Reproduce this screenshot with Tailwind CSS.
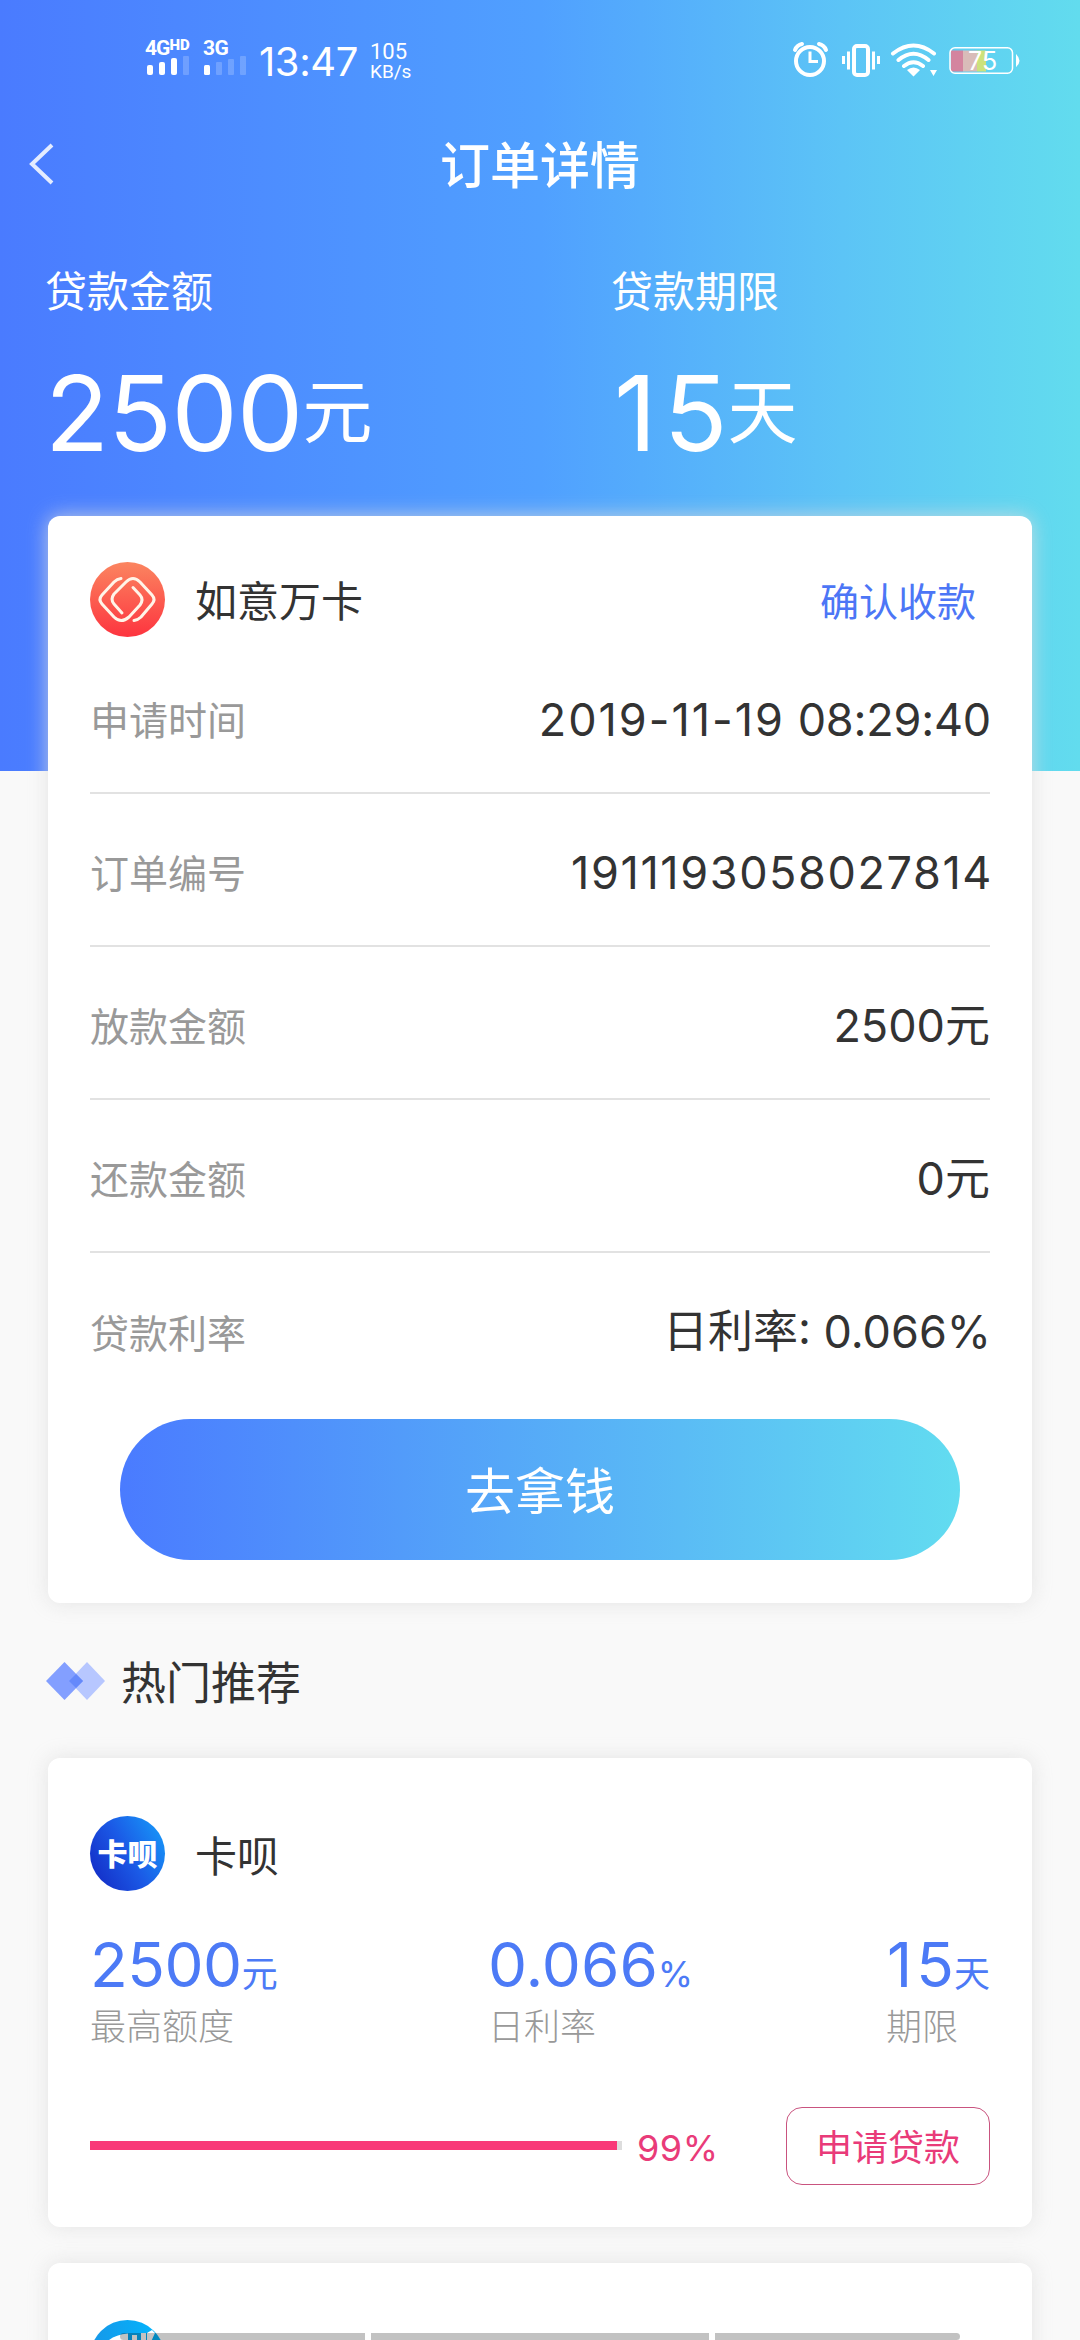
<!DOCTYPE html>
<html lang="zh-CN">
<head>
<meta charset="utf-8">
<title>订单详情</title>
<script src="https://cdn.jsdelivr.net/npm/@tailwindcss/browser@4"></script>
</head>
<body class="bg-[#f9f9f9]">
<div class="relative flex h-[2340px] w-[1080px] flex-col overflow-hidden bg-[#f9f9f9] font-[Inter,'Noto_Sans_CJK_SC',sans-serif] text-[#333]">

  <!-- Header -->
  <header class="h-[771px] shrink-0 bg-[linear-gradient(to_right,#4a7bff_0%,#50a0ff_50%,#5cc4f6_78%,#62dcee_100%)] text-white">
    <!-- Status bar -->
    <div class="flex h-[110px] items-start justify-between pt-9 pr-[60px] pl-[145px]">
      <div class="flex items-start">
        <div class="w-[58px]">
          <div class="flex h-5 items-start font-[Roboto] font-bold"><span class="text-[21px] leading-[24px] tracking-[-1px]">4G</span><span class="text-[15px] leading-[18px] font-black">HD</span></div>
          <svg class="ml-0.5 block" width="44" height="20" viewBox="0 0 44 20" fill="#fff"><rect x="0" y="9" width="6" height="10" rx="2"/><rect x="12" y="6" width="6" height="13" rx="2"/><rect x="24" y="2" width="6" height="17" rx="2"/><rect x="36" y="0" width="6" height="19" rx="1" opacity=".2"/></svg>
        </div>
        <div class="w-[56px]">
          <div class="h-5 font-[Roboto] text-[21px] leading-[24px] font-bold tracking-[-0.5px]">3G</div>
          <svg class="ml-px block" width="44" height="20" viewBox="0 0 44 20" fill="#fff"><rect x="0" y="9" width="6" height="10" rx="1.5"/><rect x="12" y="6" width="6" height="13" rx="1" opacity=".2"/><rect x="24" y="3" width="6" height="16" rx="1" opacity=".2"/><rect x="36" y="0" width="6" height="19" rx="1" opacity=".2"/></svg>
        </div>
        <div class="w-[111px] pt-[6px] text-[40px] leading-[40px] tracking-[-0.4px]">13:47</div>
        <div class="pt-[6px] font-[Roboto] text-[22px] leading-[20px]"><div>105</div><div class="text-[19px]">KB/s</div></div>
      </div>
      <svg class="mt-1" width="230" height="42" viewBox="789 40 230 42" fill="none" stroke="#fff">
        <circle cx="809" cy="61" r="14" stroke-width="4"/><path d="M809 51.500V61.500H817" stroke-width="3"/>
        <path d="M794 50q2-5 7-6M825 50q-2-5-7-6" stroke-width="4" stroke-linecap="round"/>
        <rect x="853" y="46" width="14" height="29" rx="3" stroke-width="4"/>
        <path d="M842.500 56v8M847.500 51.500v18M872.500 51.500v18M877.500 56v8" stroke-width="3"/>
        <path d="M892 53.500q20.500-16 41 0M897.500 60q15-12.500 30 0M903 66q9.500-7.500 19 0" stroke-width="4" stroke-linecap="round"/>
        <path d="M906 70q6.500-5 13 0l-6.500 6.500zM929 70h7l-3.500 6z" fill="#fff" stroke="none"/>
        <rect x="950" y="50.500" width="12" height="21" fill="#d4849f" stroke="none"/><rect x="962" y="50.500" width="14" height="21" fill="#d9bcb9" stroke="none"/><rect x="976" y="50.500" width="9" height="21" fill="#cce27c" stroke="none"/>
        <rect x="949" y="47.700" width="62.500" height="25.500" rx="5" stroke-width="1.500"/>
        <path d="M1015 54q7 7 0 13z" fill="#fff" stroke="none"/>
        <text x="967" y="69.500" fill="#fff" stroke="none" font-family="Inter" font-size="25">75</text>
      </svg>
    </div>
    <!-- Title bar -->
    <div class="grid h-[110px] grid-cols-[1fr_auto_1fr] items-center px-[29px]">
      <svg class="mt-[-3px]" width="26" height="42" viewBox="0 0 26 42" fill="none" stroke="#fff" stroke-opacity=".85" stroke-width="4"><path d="M23 2 3 21 23 40"/></svg>
      <h1 class="pt-0.5 text-[50px] leading-[60px] font-medium">订单详情</h1>
    </div>
    <!-- Summary -->
    <div class="grid grid-cols-[564px_1fr] pt-[42px] pl-[46px]">
      <div>
        <div class="ml-[-1px] text-[42px] leading-[60px]">贷款金额</div>
        <div class="mt-[31px] ml-[-1px] flex h-[120px] items-center"><span class="text-[105px] leading-[120px] tracking-[-0.7px]">2500</span><span class="text-[70px] leading-[120px]">元</span></div>
      </div>
      <div>
        <div class="ml-px text-[42px] leading-[60px]">贷款期限</div>
        <div class="mt-[31px] ml-1 flex h-[120px] items-center"><span class="text-[105px] leading-[120px]"><span class="tracking-[7px]">1</span>5</span><span class="text-[70px] leading-[120px]">天</span></div>
      </div>
    </div>
  </header>

  <main class="relative mt-[-255px] flex flex-col px-12">
    <!-- Order card -->
    <section class="h-[1087px] rounded-xl bg-white px-[42px] pt-[46px] shadow-[0_0_20px_rgba(222,222,222,0.8)]">
      <div class="flex h-[75px] items-center">
        <svg width="75" height="75" viewBox="0 0 75 75"><defs><linearGradient id="r" x1="0" y1="0" x2="0" y2="1"><stop offset="0" stop-color="#fb8560"/><stop offset="1" stop-color="#fd343f"/></linearGradient></defs><circle cx="37.500" cy="37.500" r="37.500" fill="url(#r)"/><g fill="none" stroke="#fff4e8" stroke-width="3" stroke-linecap="round" stroke-linejoin="round"><path d="M31 16.500Q27 17 24 20L12 33Q8 37.500 12 42L24 55Q31 62 39 55L50 43Q54 37.500 50 33L43 25.500"/><path d="M32 51 24 42Q20 37.500 24 32L36 20Q43 13 50 20L62 33Q66 37.500 62 42L51 55Q48 58 44 58.500"/></g></svg>
        <div class="ml-[30px] grow pt-1 text-[42px] leading-[60px]">如意万卡</div>
        <div class="mr-[14px] pt-1 text-[39px] leading-[60px] text-[#4c76f6]">确认收款</div>
      </div>
      <dl class="mt-1 text-[39px] leading-[60px] text-[#999]">
        <div class="flex h-[153px] items-center justify-between border-b-2 border-[#e2e2e2] pt-2"><dt>申请时间</dt><dd class="mt-[-2px] mr-[-1px] text-[45px] text-[#333]"><span class="tracking-[2px]">2019-11-19</span> <span class="tracking-[-0.2px]">08:29:40</span></dd></div>
        <div class="flex h-[153px] items-center justify-between border-b-2 border-[#e2e2e2] pt-2"><dt>订单编号</dt><dd class="mt-[-2px] mr-[-3px] text-[45px] tracking-[1.6px] text-[#333]">1911193058027814</dd></div>
        <div class="flex h-[153px] items-center justify-between border-b-2 border-[#e2e2e2] pt-2"><dt>放款金额</dt><dd class="mt-[-2px] text-[45px] text-[#333]">2500元</dd></div>
        <div class="flex h-[153px] items-center justify-between border-b-2 border-[#e2e2e2] pt-2"><dt>还款金额</dt><dd class="mt-[-2px] text-[45px] text-[#333]">0元</dd></div>
        <div class="flex h-[153px] items-center justify-between pt-2"><dt>贷款利率</dt><dd class="mt-[-3px] mr-[-1px] text-[45px] text-[#333]">日利率: 0.066%</dd></div>
      </dl>
      <button class="mx-[30px] mt-[13px] block h-[141px] w-[840px] rounded-full bg-[linear-gradient(to_right,#4a7bff,#62dcf0)] pt-1.5 text-[50px] text-white">去拿钱</button>
    </section>

    <!-- Recommendations -->
    <div class="flex h-[155px] items-center">
      <svg class="ml-[-2px]" width="60" height="40" viewBox="0 0 60 40"><path d="M41 1 59 20 41 39 23 20z" fill="#b7c7ff"/><path d="M18.500 1 37 20 18.500 39 0 20z" fill="#839fff"/><path d="M30 13 37 20 30 27 23 20z" fill="#6589fb"/></svg>
      <h2 class="ml-[15px] pt-1.5 text-[45px] leading-[60px]">热门推荐</h2>
    </div>

    <section class="h-[469px] rounded-xl bg-white px-[42px] pt-[58px] shadow-[0_0_20px_rgba(222,222,222,0.8)]">
      <div class="flex h-[75px] items-center">
        <div class="flex size-[75px] items-center justify-center rounded-full bg-[linear-gradient(60deg,#142fc8_10%,#1b5ae6_50%,#1793f7_90%)] text-[30px] leading-none font-black text-white">卡呗</div>
        <div class="ml-[30px] pt-1.5 text-[42px] leading-[60px]">卡呗</div>
      </div>
      <div class="mt-[34px] grid grid-cols-[398px_398px_1fr] text-[36px] text-[#4c7af6]">
        <div><div class="flex h-[80px] items-baseline leading-[80px]"><span class="text-[62px] tracking-[-0.5px]">2500</span><span>元</span></div><div class="leading-[44px] font-light text-[#999]">最高额度</div></div>
        <div><div class="flex h-[80px] items-baseline leading-[80px]"><span class="text-[62px]">0.066</span>%</div><div class="leading-[44px] font-light text-[#999]">日利率</div></div>
        <div><div class="ml-px flex h-[80px] items-baseline leading-[80px]"><span class="text-[62px]"><span class="tracking-[4px]">1</span>5</span><span>天</span></div><div class="leading-[44px] font-light text-[#999]">期限</div></div>
      </div>
      <div class="mt-[58px] flex h-[78px] items-center">
        <div class="mt-[-2px] h-[9px] w-[532px] bg-[#ddd]"><div class="h-full bg-[#f93978]" style="width:99%"></div></div>
        <div class="ml-[15px] grow pt-1 text-[36px] leading-[44px] tracking-[0.5px] text-[#e93b79]">99%</div>
        <button class="h-[78px] w-[204px] rounded-2xl border border-[#c9547f] pt-1 text-[36px] leading-[44px] text-[#e93b79]">申请贷款</button>
      </div>
    </section>

    <section class="mt-9 h-[469px] rounded-xl bg-white px-[42px] pt-[57px] shadow-[0_0_20px_rgba(222,222,222,0.8)]">
      <svg width="75" height="75" viewBox="0 0 75 75"><defs><linearGradient id="b" x1="0" y1="0" x2="1" y2="0"><stop offset="0" stop-color="#1797e8"/><stop offset="1" stop-color="#00b8ff"/></linearGradient></defs><circle cx="37.500" cy="37.500" r="37.500" fill="url(#b)"/><path d="M15 24 Q22 15 38 13.500V24zM42 15h5v9h-5zM51 13h5v11h-5zM57 13 62 10 65 13 60 24h-3z" fill="#fff"/></svg>
    </section>
  </main>

  <!-- Gesture navigation hints -->
  <div class="absolute inset-x-[120px] top-[2333px] flex h-[7px] gap-1.5">
    <div class="w-[245px] rounded-l-full bg-black/24"></div><div class="grow bg-black/24"></div><div class="w-[245px] rounded-r-full bg-black/24"></div>
  </div>
</div>
</body>
</html>
